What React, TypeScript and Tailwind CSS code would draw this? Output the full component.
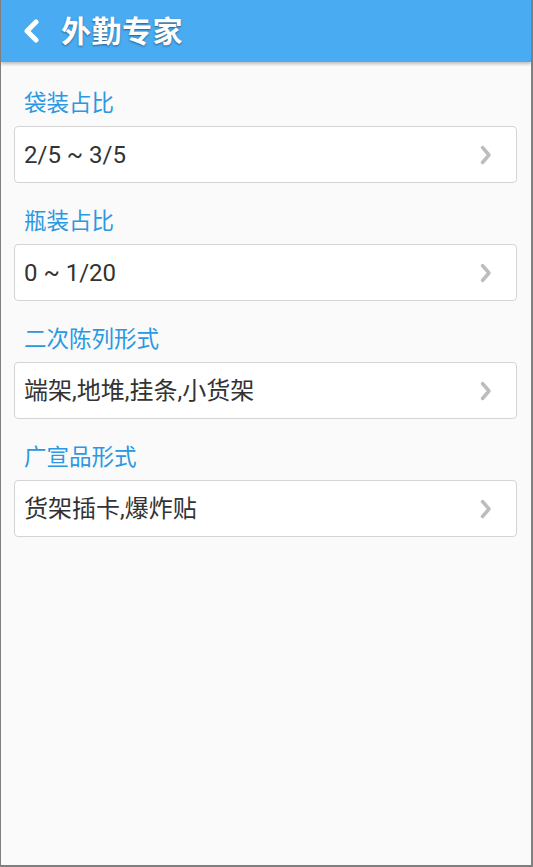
const rows = [
  { label: '袋装占比', value: '2/5 ~ 3/5' },
  { label: '瓶装占比', value: '0 ~ 1/20' },
  { label: '二次陈列形式', value: '端架,地堆,挂条,小货架' },
  { label: '广宣品形式', value: '货架插卡,爆炸贴' },
];

const font = { fontFamily: 'Roboto, "Noto Sans CJK SC", sans-serif' };

export default function App() {
  return (
    <div
      className="w-[533px] h-[867px] flex flex-col bg-[#fafafa] border-l border-r-2 border-b-2 border-[#7f7f7f] overflow-hidden"
      style={font}
    >
      <header className="relative h-[62px] shrink-0 bg-[#49abf1] flex items-center shadow-[0_2px_3px_rgba(0,0,0,0.25)] z-10">
        <svg className="ml-[21px] w-[18px] h-[24px]" viewBox="0 0 18 24" fill="none">
          <polyline
            points="14,3 5,12 14,21"
            stroke="white"
            strokeWidth="5"
            strokeLinecap="round"
            strokeLinejoin="round"
          />
        </svg>
        <h1 className="ml-[21px] text-[30px] font-bold text-white tracking-[0.5px] [text-shadow:0_1px_2px_rgba(0,0,0,0.45)]">
          外勤专家
        </h1>
      </header>

      <main className="flex flex-col pl-[13px] pr-[14px] pt-[3px]">
        {rows.map(({ label, value }) => (
          <section key={label} className="flex flex-col">
            <div className="pt-[25px] pb-[10px] pl-[10px] text-[22.5px] leading-[26px] text-[#2a98e2]">
              {label}
            </div>
            <div className="h-[57px] flex items-center justify-between bg-white border border-[#d4d4d4] rounded-[4px] pl-[9px] pr-[24px]">
              <span className="text-[24px] leading-[28px] text-[#333333]">{value}</span>
              <svg className="w-[12px] h-[20px]" viewBox="0 0 12 20" fill="none">
                <polyline
                  points="2.5,2.5 9,10 2.5,17.5"
                  stroke="#bdbdbd"
                  strokeWidth="3.5"
                  strokeLinecap="round"
                  strokeLinejoin="round"
                />
              </svg>
            </div>
          </section>
        ))}
      </main>
    </div>
  );
}
